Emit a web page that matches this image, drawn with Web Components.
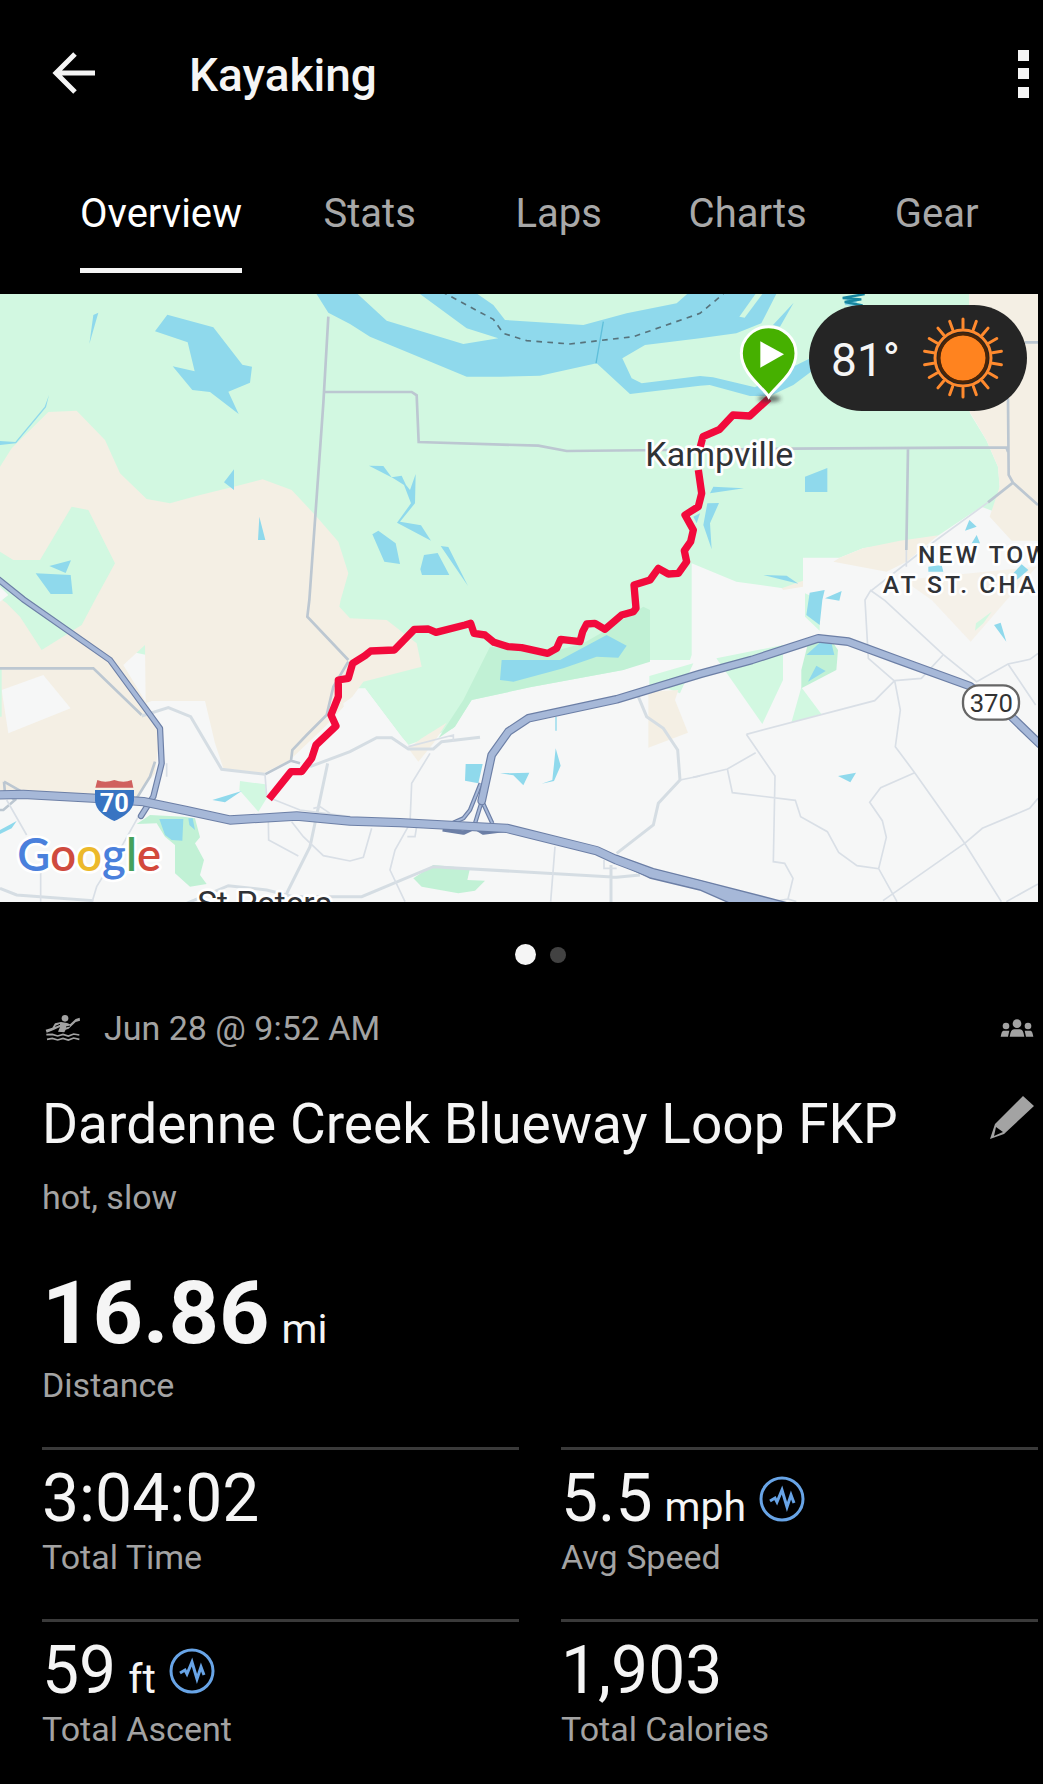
<!DOCTYPE html>
<html lang="en">
<head>
<meta charset="utf-8">
<meta name="viewport" content="width=device-width, initial-scale=1">
<title>Kayaking</title>
<style>
  body { margin: 0; background: #000; color: #f5f5f5; font-family: Roboto, "Liberation Sans", sans-serif; }
</style>
</head>
<body>
<activity-page></activity-page>

<script>
const define = (name, html) => {
  const template = document.createElement('template');
  template.innerHTML = html;
  customElements.define(name, class extends HTMLElement {
    constructor() {
      super();
      this.attachShadow({ mode: 'open' }).append(template.content.cloneNode(true));
    }
  });
};

define('app-header', `
<style>
  :host { display: block; }
  header { display: flex; align-items: center; height: 146px; padding: 0 12px 0 50px; }
  h1 { flex: 1; margin: 0; padding: 4px 0 0 91px; font-size: 46px; line-height: 58px; font-weight: 500; }
  button { border: 0; padding: 0; background: none; color: inherit; display: flex; }
</style>
<header>
  <button aria-label="Back"><svg width="48" height="48" viewBox="0 0 48 48" fill="none" stroke="currentColor" stroke-width="5"><path d="M45 24H6M25 5L6 24l19 19"/></svg></button>
  <h1><slot></slot></h1>
  <button aria-label="More options"><svg width="18" height="50" viewBox="0 0 18 50" fill="currentColor"><path d="M5 2h11v11H5zM5 20h11v11H5zM5 39h11v11H5z"/></svg></button>
</header>`);

define('tab-bar', `
<style>
  :host { display: block; }
  nav { display: flex; padding: 44px 0 21px 47px; }
</style>
<nav role="tablist"><slot></slot></nav>`);

define('tab-item', `
<style>
  :host { display: flex; justify-content: center; flex: 0 0 auto; min-width: 189px; box-sizing: border-box; padding: 0 33px; color: #a8a8a8; }
  :host([selected]) { color: #fff; }
  button { border: 0; border-bottom: 5px solid transparent; background: none; padding: 0 0 30px; margin: 0; color: inherit; font: inherit; font-size: 40px; line-height: 48px; }
  :host([selected]) button { border-bottom-color: #f5f5f5; }
</style>
<button role="tab"><slot></slot></button>`);

define('weather-pill', `
<style>
  :host { display: flex; align-items: center; gap: 21px; height: 106px; box-sizing: border-box; padding: 0 22px; border-radius: 53px; background: #252525; color: #f5f5f5; font-size: 46px; line-height: 54px; }
  span { padding-top: 4px; }
  svg { display: block; }
</style>
<span><slot></slot></span>
<svg width="84" height="84" viewBox="-42 -42 84 84" aria-hidden="true">
  <circle r="23" fill="#ff831f"/>
  <circle r="28" fill="none" stroke="#ff8a2e" stroke-width="3"/>
  <circle r="24" fill="none" stroke="#4a2508" stroke-width="3"/>
  <g id="rays" stroke="#ff8a2e" stroke-width="3" stroke-linecap="round"></g>
</svg>`);

define('route-map', `
<style>
  :host { display: block; position: relative; overflow: hidden; }
  svg { display: block; width: 100%; height: auto; }
  weather-pill { position: absolute; top: 11px; right: 11px; }
  text { font-family: Roboto, "Liberation Sans", sans-serif; }
  .halo { paint-order: stroke; stroke: #fff; stroke-width: 16; stroke-linejoin: round; fill: #303236; }
  .district { font-size: 74px; font-weight: 500; letter-spacing: 9px; }
  .green { fill: #d2f8e1; } .park { fill: #c1f1d5; } .sand { fill: #f4efe4; } .water { fill: #8fd9ec; } .white { fill: #f6f7f7; }
  .road { fill: none; stroke: #bcc7d1; stroke-width: 8; }
  .street { fill: none; stroke: #d5dde3; stroke-width: 9; }
  .lane { fill: none; stroke: #d9dfe6; stroke-width: 5; }
  .edge, .fill { fill: none; stroke-linejoin: round; }
  .edge { stroke: #6c7fa6; stroke-width: 28; } .fill { stroke: #a6b8d8; stroke-width: 22; }
  .thin .edge { stroke-width: 19; } .thin .fill { stroke-width: 12; }
  .ramp .edge { stroke-width: 13; } .ramp .fill { stroke-width: 6; }
</style>
<svg viewBox="0 0 3114 1824" role="img" aria-label="Route map">
  <defs><filter id="soft" x="-50%" y="-100%" width="200%" height="300%"><feGaussianBlur stdDeviation="7"/></filter></defs>
  <rect width="3114" height="1824" class="white"/>
  <!-- land cover -->
  <g transform="translate(0 -12)">
    <path class="green" d="M0 0H2910V370L2959 450 2994 530 2999 590 2984 665 2944 650 2809 740 2679 762 2589 775 2519 803H2409V880L2349 895 2209 875 2075 820V1095L2070 1110H1950L1870 1140 1590 1192 1415 1230 1360 1315 1225 1365 1200 1335 1095 1195 900 1195 0 1000Z"/>
    <path class="sand" d="M0 530L35 475 145 366 230 362 315 450 360 550 440 627 510 640 600 615 710 588 788 568 875 600 950 680 1015 755 1045 850 1022 930 1018 950 1050 985 1160 990 1250 1060 1265 1130 1090 1175 1050 1230 975 1310 880 1400 870 1410 790 1450 670 1435 645 1360 615 1233H455L437 1240 435 1065 370 1125 470 1290 480 1330 465 1450 410 1520 0 1500Z"/>
    <path class="green" d="M0 785L40 810H120L215 650 265 660 345 820 290 920 245 1005 125 1080 60 980 20 940 0 925Z"/>
    <path class="white" d="M5 1200L130 1155 212 1255 25 1330ZM0 890L25 915 0 935Z"/>
    <path class="sand" d="M2907 0H3114V752H3035L2969 680 2999 590 2994 530 2959 450 2907 362Z"/>
    <path class="sand" d="M2519 803L2589 775 2700 752 2815 736 2719 815 2660 845 2500 815ZM2345 895L2409 872V890L2350 900Z"/>
    <path class="sand" d="M2710 870L3110 830 3020 930 2912 1055 2795 930Z" opacity=".75"/>
    <path class="green" d="M2925 1022L2928 1000 2975 965 2950 1000Z"/>
  </g>
  <g transform="translate(1050 918)">
    <path class="park" d="M420 140L590 160 700 130 765 92 880 20 900 30V185L820 210 540 262 365 300 315 380 265 415 340 300Z"/>
    <path class="white" d="M-20 310L45 265 155 410 180 440 265 410 250 440 0 460Z"/>
    <path class="sand" d="M215 415L290 368 250 430 205 485 175 445Z"/>
    <path class="green" d="M898 228L1030 190 990 280 950 265 898 262Z"/>
    <path class="sand" d="M895 275L985 270 975 300 1014 398 895 443Z"/>
    <path class="park" d="M190 835L250 795 360 805 352 840 405 842 375 872 325 880 215 860Z"/>
    <path class="water" d="M455 180H630L770 105 830 137 805 173 740 170 640 205 490 245 450 240ZM347 492L398 492 385 550 345 542ZM450 520L538 518 520 556 490 526ZM617 445L632 497 612 543 575 551 607 540Z"/>
    <path stroke="#8fd9ec" stroke-width="4" fill="none" d="M618 350V392"/>
  </g>
  <g transform="translate(0 918)">
    <path class="green" d="M720 543L795 553 800 595 775 635 718 570ZM0 205H5V350H0Z"/>
    <path class="park" d="M410 672L450 645 550 650 585 655 600 712 585 730 612 780 600 825 620 852 570 860 525 820 525 735 495 710 470 670Z"/>
    <path class="water" d="M478 657H550L547 722 515 720 495 705ZM565 655L578 655 585 690 568 675ZM637 600L725 573 675 607ZM0 690L50 663 35 685 0 702Z"/>
  </g>
  <g transform="translate(2079 918)">
    <path class="green" d="M70 175L270 135V240L208 372ZM336 -20L380 0 380 92 336 50ZM325 262L385 342 295 368Z"/>
    <path class="park" d="M345 130L420 128 435 150 430 210 325 265 325 210Z"/>
    <path class="water" d="M350 -22L395 -30 388 0 380 75 340 45ZM340 165L380 128 415 128 424 165ZM370 197L398 213 345 245ZM435 528L489 518 472 547ZM903 75L923 68 940 125ZM995 -15L1013 15Z"/>
  </g>
  <!-- rivers and ponds -->
  <g transform="translate(0 -12)" class="water">
    <path d="M465 124L502 74 640 112 727 224 756 230 750 278 685 305 716 372 630 306 577 300 518 229 584 244 563 157ZM280 75L295 68 268 162ZM672 577L702 538V600ZM778 680L796 750H774ZM148 828L213 811 197 849ZM107 850L212 855 218 912H152Z"/>
    <path d="M147 315L138 352 48 460 0 465V453L46 456 134 350Z"/>
  </g>
  <g transform="translate(1050 -12)">
    <path class="water" d="M-108 0L-65 68 0 102 60 140 180 190 350 260H450L570 257 740 220 840 312 1050 287 1079 285 1200 318H1260L1330 285 1390 240V200L1320 235 1215 292 1089 262 1050 258 875 280 845 265 817 205 885 165 1050 145 1159 130 1234 100 1285 0H1025L980 40 830 70 700 105 465 90 430 45 365 0H195L210 12 350 115 445 145 340 162 110 92 10 0Z"/>
    <path class="water" d="M57 527L100 528 125 562 155 557 168 585 180 600 197 552 195 640 150 695 213 706 243 752 141 698 183 640 162 585 130 565ZM67 733L85 722 137 760 150 822 103 815ZM222 795L263 789 298 855H216L211 838ZM272 768L295 771 354 888ZM1030 680L1050 670 1040 700Z"/>
    <path class="water" d="M1090 590L1182 595 1080 610ZM1072 640L1107 639 1080 700 1085 778 1060 705ZM1365 560L1432 534V606H1365ZM1240 855L1310 857 1345 881ZM1425 925L1475 903 1468 932ZM1845 722L1858 690 1880 710ZM1865 760L1880 735 1890 760ZM1735 830L1775 825 1780 845 1735 845ZM1980 860L2015 823 2035 840 2000 870Z"/>
    <path fill="#d2f8e1" d="M1225 0L1168 80 1184 83 1246 0Z"/>
    <path class="water" d="M1331 38L1269 105 1290 110ZM1484 45L1492 24H1520V50Z"/>
    <path fill="none" stroke="#57737c" stroke-width="5" stroke-dasharray="17 16" d="M275 5L430 88 460 130 530 152 660 162 850 140 1050 70 1120 12"/>
    <path fill="none" stroke="#5fbfda" stroke-width="4" d="M760 95L738 220"/>
    <path fill="none" stroke="#1787a0" stroke-width="7" d="M1544 12L1478 24 1534 28 1484 36 1538 46"/>
  </g>
  <!-- roads -->
  <g transform="translate(0 -12)">
    <path class="road" d="M985 80L970 340 928 930 922 980 1045 1110M975 306H1235L1250 316 1256 456 1615 467 1700 483 2000 480 2379 476 3019 472 3024 485M3024 325L3026 555 3039 578 3114 645M2724 475L2719 780M3075 157H3114M3039 578L2964 637"/>
    <path class="lane" d="M2964 637L2809 750 2610 905 2595 930 2605 1105 2682 1172M2719 780V830M2610 900L2655 932 2829 1093 2930 1175 3024 1122 3090 1108 3114 1090"/>
  </g>
  <g transform="translate(0 918)">
    <path class="road" stroke-width="7" d="M1045 185L1000 260 980 345 920 405 877 450 873 482 795 523M0 205H280L425 345M873 482L900 490M465 485L450 530 410 595M12 545L15 580 45 600 10 630H0M12 545L65 575"/>
    <path class="street" d="M425 348L505 323 572 350 665 508 795 523M930 500L1050 455 1130 413H1175L1225 447H1300L1325 425 1440 412M983 490L930 740 865 870 845 915M0 865L50 885 280 902M560 910L685 857 800 870 880 890H1085L1300 800 1850 832 1920 825M1833 795V910M1850 760L1960 675 1975 610 2040 540 2033 450 1990 385 1940 350 1915 290"/>
    <path class="lane" d="M795 523L800 590 900 630 1050 650M20 600L80 705M415 650L370 730 290 860 275 910M122 815V905M805 665L806 720 895 768M875 665L910 710 970 767 1050 783 1090 772 1115 685M940 625L960 620 990 640M1225 440L1360 405V425M1290 460L1235 550 1230 670 1185 750 1170 810 1215 905M1222 710H1245L1250 680M1665 740L1652 905M2040 540L2100 528M1812 780V805H1850M500 490V530"/>
  </g>
  <g transform="translate(2079 918)" class="lane">
    <path d="M0 532L103 507 188 458M103 507L118 578 307 601 323 650 403 695 437 757 492 797 557 806 612 905M160 403L545 302 605 242 685 235 750 165M160 403L246 528 241 785 275 790 300 835 285 897 310 905M605 242L622 330 607 440 665 518 815 730 925 905M665 518L563 563 530 607 568 662 580 712 557 806M570 902L815 730 868 685 1010 625 1035 595M940 905L1035 852M945 192L1028 315M240 905L285 897"/>
  </g>
  <!-- highways -->
  <g transform="translate(0 918)">
    <g class="ramp">
      <path class="edge" d="M1442 550L1410 630 1390 655 1360 668M1445 605L1425 670M1447 605L1477 670M1328 688L1390 698 1425 682 1450 698 1510 690"/>
      <path class="fill" d="M1442 550L1410 630 1390 655 1360 668M1445 605L1425 670M1447 605L1477 670"/>
    </g>
    <g class="thin">
      <path class="edge" stroke-linecap="round" d="M-5 -62L70 -2 330 180 440 330 480 385 485 490 460 590 423 648"/>
      <path class="fill" stroke-linecap="round" d="M-5 -62L70 -2 330 180 440 330 480 385 485 490 460 590 423 648"/>
    </g>
    <path class="edge" stroke-linecap="round" style="stroke-width:26" d="M1445 603L1475 465 1525 395 1585 355 1850 298 2100 222 2255 180 2455 115 2545 125 2689 178 2909 258 3029 345 3119 432"/>
    <path class="fill" stroke-linecap="round" style="stroke-width:19" d="M1445 603L1475 465 1525 395 1585 355 1850 298 2100 222 2255 180 2455 115 2545 125 2689 178 2909 258 3029 345 3119 432"/>
    <path class="edge" d="M-5 585L70 583 290 595 430 605 560 632 690 660 890 648 1050 663 1200 668 1520 685 1790 752 1850 780 1950 818 2100 855 2330 917"/>
    <path class="edge" d="M1850 768L1960 808 2100 843 2360 910V925H2230L2100 868 1950 832 1850 785Z" style="stroke-width:8"/>
    <path class="fill" d="M-5 585L70 583 290 595 430 605 560 632 690 660 890 648 1050 663 1200 668 1520 685 1790 752 1850 780 1950 818 2100 855 2330 917"/>
    <path fill="#a6b8d8" d="M1850 768L1960 808 2100 843 2360 910V925H2230L2100 868 1950 832 1850 785Z"/>
  </g>
  <text x="1936" y="516" font-size="102" class="halo">Kampville</text>
  <!-- recorded track -->
  <path transform="translate(1050 918)" fill="none" stroke="#f20a3c" stroke-width="22" stroke-linejoin="round" d="M1257 -605L1199 -552 1149 -555 1109 -512 1059 -490 1051 -460M1045 -390L1055 -320 1045 -280 1005 -255 1030 -210 1022 -175 1003 -148 1010 -115 985 -80 955 -78 925 -95 900 -60 852 -45 858 25 850 35 815 45 765 88 735 70 710 72 698 95 690 125 632 118 620 145 593 160 515 143 475 140 432 127 405 105 372 100 362 70 345 75 258 97 235 87 193 88 133 150 62 153 45 167 8 190 -5 235 -35 240V290L-57 345 -42 378 -102 435 -115 475 -145 515H-177L-243 597"/>
  <ellipse cx="2308" cy="314" rx="34" ry="10" fill="#333" opacity=".7" filter="url(#soft)"/>
  <path fill="#46b000" stroke="#fff" stroke-width="9" d="M2306 308C2290 280 2224 240 2224 178A82 80 0 0 1 2388 178C2388 240 2322 280 2306 308Z"/>
  <path fill="#fff" d="M2281 142L2352 181 2281 221Z"/>
  <text class="halo district" x="2754" y="806">NEW TOW</text>
  <text class="halo district" x="2648" y="896">AT ST. CHA</text>
  <text x="592" y="1863" font-size="100" class="halo">St Peters</text>
  <!-- route shields -->
  <path fill="#d0605e" d="M292 1458Q315 1468 343 1458Q371 1468 395 1458L400 1481H286Z"/>
  <path fill="#3874c2" d="M285 1488H402V1520C400 1550 370 1568 343 1581C316 1568 287 1550 285 1520Z"/>
  <text x="343" y="1555" font-size="76" font-weight="700" fill="#fff" text-anchor="middle">70</text>
  <rect x="2889" y="1174" width="168" height="103" rx="48" fill="#fff" stroke="#666" stroke-width="7"/>
  <text x="2974" y="1253" font-size="77" fill="#333" text-anchor="middle">370</text>
  <text x="52" y="1731" font-size="136" style="font-family:Lato,sans-serif;paint-order:stroke;stroke:#fff;stroke-width:16;stroke-linejoin:round" font-weight="600"><tspan fill="#4a80dc">G</tspan><tspan fill="#cf4b3f">o</tspan><tspan fill="#ecb92b">o</tspan><tspan fill="#4a80dc">g</tspan><tspan fill="#45a15c">l</tspan><tspan fill="#d3493c">e</tspan></text>
</svg>
<weather-pill>81°</weather-pill>`);

define('page-dots', `
<style>
  :host { display: flex; align-items: center; justify-content: center; gap: 14px; height: 105px; padding-left: 42px; }
  i { width: 16px; height: 16px; border-radius: 50%; background: #424242; }
  i.on { width: 21px; height: 21px; background: #f5f5f5; }
</style>
<i class="on"></i><i></i>`);

define('activity-summary', `
<style>
  :host { display: block; color: #a3a3a3; font-size: 34px; line-height: 42px; }
  .meta { display: flex; align-items: center; gap: 20px; }
  .meta time { flex: 1; }
  .name { display: flex; align-items: center; justify-content: space-between; padding: 42px 0 19px; }
  h2 { margin: 0; font-size: 55px; line-height: 66px; font-weight: 400; color: #f5f5f5; }
  button { display: flex; border: 0; padding: 0; background: none; color: inherit; }
  p { margin: 0; }
  svg { display: block; }
</style>
<div class="meta">
  <svg width="42" height="42" viewBox="0 0 126 126" fill="currentColor" aria-hidden="true">
    <circle cx="69" cy="34" r="10"/>
    <path d="M11 68L31 62 39 49 57 45 75 48 84 52 101 36 113 32 114 41 101 45 80 65 71 68 67 76 48 74 54 60 33 70 14 77Z"/>
    <path fill="none" stroke="#000" stroke-width="3" d="M40 58L54 52M72 60L84 57"/>
    <path fill="none" stroke="currentColor" stroke-width="5" d="M13 83L31 82 47 87 63 82 79 87 95 81 112 84M15 97L31 94 47 99 63 94 79 99 95 93 112 97"/>
  </svg>
  <time><slot name="date"></slot></time>
  <svg width="42" height="42" viewBox="0 0 126 126" fill="currentColor" aria-label="Visible to groups">
    <circle cx="63" cy="50" r="13"/><circle cx="30" cy="57" r="10"/><circle cx="96" cy="57" r="10"/>
    <path d="M41 89Q44 67 54 67H72Q82 67 85 89ZM14 89Q17 71 22 71H40L36 89ZM112 89Q109 71 104 71H86L90 89Z"/>
  </svg>
</div>
<div class="name">
  <h2><slot></slot></h2>
  <button aria-label="Edit name"><svg width="54" height="66" viewBox="0 0 54 66" fill="currentColor"><path fill-rule="evenodd" d="M39 5L50 15 20 43 6 48 11 33ZM12 36L10 45 19 41Z"/></svg></button>
</div>
<p><slot name="note"></slot></p>`);

define('stat-value', `
<style>
  :host { display: block; color: #f5f5f5; }
  .value { display: flex; align-items: baseline; gap: 12px; font-size: 66px; line-height: 74px; }
  .label { color: #a3a3a3; font-size: 34px; line-height: 42px; }
  .unit { font-size: 41px; line-height: 41px; }
  svg { display: none; align-self: center; }
  :host([unitless]) .unit { display: none; }
  :host([sensor]) svg { display: block; }
  :host([lead]) .value { font-size: 88px; line-height: 90px; font-weight: 700; padding-bottom: 6px; }
  :host([lead]) .unit { font-weight: 400; }
</style>
<div class="value"><span><slot></slot></span><span class="unit"><slot name="unit"></slot></span>
  <svg width="48" height="48" viewBox="-24 -24 48 48" fill="none" stroke="#68a4e6" aria-label="Measured by sensor"><circle r="21" stroke-width="3"/><path stroke-width="3" stroke-linejoin="miter" d="M-12 2L-7 -1 -5 3 0 -9 5 8 9 -4 12 4"/></svg>
</div>
<div class="label"><slot name="label"></slot></div>`);

define('stat-grid', `
<style>
  :host { display: grid; grid-template-columns: 1fr 1fr; column-gap: 42px; }
  ::slotted(*) { border-top: 3px solid #3a3a3a; padding: 12px 0 41px; }
</style>
<slot></slot>`);

define('activity-page', `
<style>
  :host { display: block; padding-right: 5px; }
  app-header { margin-right: -5px; }
  main { padding-left: 42px; }
  .lead { padding: 50px 0 41px; }
</style>
<app-header>Kayaking</app-header>
<tab-bar>
  <tab-item selected>Overview</tab-item><tab-item>Stats</tab-item><tab-item>Laps</tab-item><tab-item>Charts</tab-item><tab-item>Gear</tab-item>
</tab-bar>
<route-map></route-map>
<page-dots></page-dots>
<main>
  <activity-summary>Dardenne Creek Blueway Loop FKP<span slot="date">Jun 28 @ 9:52 AM</span><span slot="note">hot, slow</span></activity-summary>
  <div class="lead"><stat-value lead>16.86<span slot="unit">mi</span><span slot="label">Distance</span></stat-value></div>
  <stat-grid>
    <stat-value unitless>3:04:02<span slot="label">Total Time</span></stat-value>
    <stat-value sensor>5.5<span slot="unit">mph</span><span slot="label">Avg Speed</span></stat-value>
    <stat-value sensor>59<span slot="unit">ft</span><span slot="label">Total Ascent</span></stat-value>
    <stat-value unitless>1,903<span slot="label">Total Calories</span></stat-value>
  </stat-grid>
</main>`);

const addRays = pill => {
  const group = pill.shadowRoot.getElementById('rays');
  for (let i = 0; i < 18; i++) {
    const line = document.createElementNS('http://www.w3.org/2000/svg', 'line');
    line.setAttribute('y1', -30);
    line.setAttribute('y2', -39);
    line.setAttribute('transform', `rotate(${i * 20})`);
    group.append(line);
  }
};
addRays(document.querySelector('activity-page').shadowRoot.querySelector('route-map').shadowRoot.querySelector('weather-pill'));
</script>
</body>
</html>
